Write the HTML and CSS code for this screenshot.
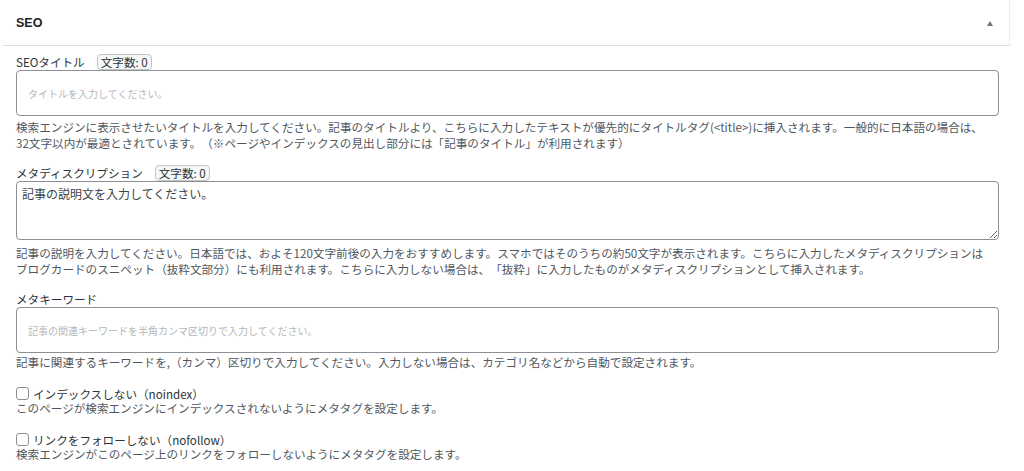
FILE: index.html
```html
<!DOCTYPE html>
<html lang="ja">
<head>
    <meta charset="UTF-8">
    <meta name="viewport" content="width=device-width, initial-scale=1.0">
    <title>SEO</title>
    <link rel="stylesheet" href="styles.css">
</head>
<body>
    <div class="postbox">
        <div class="postbox-header">
            <h2>SEO</h2>
            <span class="toggle-arrow"></span>
        </div>
        <div class="inside">
            <div class="field">
                <div class="field-label">
                    <label for="seo-title">SEOタイトル</label>
                    <span class="count">文字数: 0</span>
                </div>
                <input type="text" id="seo-title" class="text-input" placeholder="タイトルを入力してください。">
                <p class="description">検索エンジンに表示させたいタイトルを入力してください。記事のタイトルより、こちらに入力したテキストが優先的にタイトルタグ(&lt;title&gt;)に挿入されます。一般的に日本語の場合は、32文字以内が最適とされています。（※ページやインデックスの見出し部分には「記事のタイトル」が利用されます）</p>
            </div>

            <div class="field">
                <div class="field-label">
                    <label for="meta-desc">メタディスクリプション</label>
                    <span class="count">文字数: 0</span>
                </div>
                <textarea id="meta-desc" class="text-area">記事の説明文を入力してください。</textarea>
                <p class="description desc-after-area">記事の説明を入力してください。日本語では、およそ120文字前後の入力をおすすめします。スマホではそのうちの約50文字が表示されます。こちらに入力したメタディスクリプションはブログカードのスニペット（抜粋文部分）にも利用されます。こちらに入力しない場合は、「抜粋」に入力したものがメタディスクリプションとして挿入されます。</p>
            </div>

            <div class="field">
                <div class="field-label">
                    <label for="meta-keywords">メタキーワード</label>
                </div>
                <input type="text" id="meta-keywords" class="text-input" placeholder="記事の関連キーワードを半角カンマ区切りで入力してください。">
                <p class="description desc-tight">記事に関連するキーワードを,（カンマ）区切りで入力してください。入力しない場合は、カテゴリ名などから自動で設定されます。</p>
            </div>

            <div class="check-field">
                <label class="check-label"><input type="checkbox" class="check">インデックスしない（noindex）</label>
                <p class="check-desc">このページが検索エンジンにインデックスされないようにメタタグを設定します。</p>
            </div>

            <div class="check-field">
                <label class="check-label"><input type="checkbox" class="check">リンクをフォローしない（nofollow）</label>
                <p class="check-desc">検索エンジンがこのページ上のリンクをフォローしないようにメタタグを設定します。</p>
            </div>
        </div>
    </div>
</body>
</html>
```

FILE: styles.css
```css
body {
    margin: 0;
    background: #fff;
    font-family: "Noto Sans CJK JP", sans-serif;
    color: #3c434a;
    text-spacing-trim: space-all;
}

.postbox {
    margin-left: 3px;
    width: 1007px;
    background: #fff;
}

.postbox-header {
    display: flex;
    justify-content: space-between;
    align-items: center;
    height: 46px;
    padding: 1px 16px 0 13px;
    box-sizing: border-box;
    border-bottom: 1px solid #dcdcde;
    border-right: 1px solid #ececec;
}

.postbox-header h2 {
    margin: 0;
    font-family: "Liberation Sans", sans-serif;
    font-size: 12.5px;
    font-weight: bold;
    color: #1d2327;
}

.toggle-arrow {
    width: 0;
    height: 0;
    border-left: 3.5px solid transparent;
    border-right: 3.5px solid transparent;
    border-bottom: 5px solid #72777c;
}

.inside {
    padding: 8px 11px 0 13px;
}

.field {
    margin-bottom: 14px;
}

.field-label {
    display: flex;
    align-items: center;
    height: 16px;
    font-size: 11.6px;
    color: #2c3338;
}

.count {
    margin-left: 12px;
    padding: 0 3px;
    line-height: 14px;
    border: 1px solid #c3c4c7;
    border-radius: 4px;
    background: #f6f7f7;
    color: #2c3338;
}

.text-input {
    display: block;
    box-sizing: border-box;
    width: 983px;
    height: 46px;
    margin: 0;
    padding: 0 11px;
    border: 1px solid #8c8f94;
    border-radius: 4px;
    font-family: inherit;
    font-size: 10px;
    color: #2c3338;
}

.text-input::placeholder {
    color: #b4b7ba;
}

.text-area {
    display: block;
    box-sizing: border-box;
    width: 983px;
    height: 59px;
    margin: 0;
    padding: 3px 5px;
    border: 1px solid #8c8f94;
    border-radius: 4px;
    font-family: inherit;
    font-size: 12px;
    line-height: 17px;
    color: #3c434a;
    resize: vertical;
}

.description {
    max-width: 970px;
    margin: 3px 0 0;
    font-size: 11.6px;
    line-height: 16px;
    color: #50575e;
}

.desc-after-area {
    margin-top: 5px;
}

.desc-tight {
    margin-top: 1px;
}

.check-field {
    margin-top: 16px;
}

.check-label {
    display: flex;
    align-items: center;
    height: 15px;
    font-size: 11.6px;
    color: #2c3338;
}

.check {
    appearance: none;
    width: 13px;
    height: 13px;
    margin: 0 4px 0 0;
    border: 1px solid #8c8f94;
    border-radius: 3px;
    background: #fff;
}

.check-desc {
    margin: 0;
    font-size: 11.6px;
    line-height: 15px;
    color: #50575e;
}
```
